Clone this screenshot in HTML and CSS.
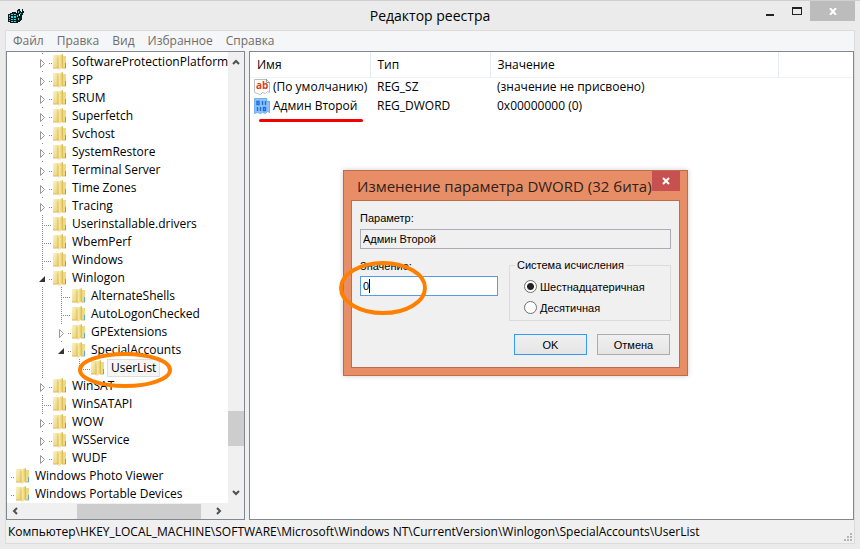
FILE: index.html
```
<!DOCTYPE html>
<html lang="ru">
<head>
<meta charset="utf-8">
<title>Редактор реестра</title>
<link rel="stylesheet" href="styles.css">
</head>
<body>
<svg class="defs" aria-hidden="true">
  <defs>
    <linearGradient id="gold" x1="0" x2="1" y1="0" y2="1"><stop offset="0" stop-color="#fbf3c4"/><stop offset="1" stop-color="#e8cd6c"/></linearGradient>
    <linearGradient id="fold" x1="0" x2="1"><stop offset="0" stop-color="#fbf1b8"/><stop offset=".6" stop-color="#efd981"/><stop offset="1" stop-color="#d6b650"/></linearGradient>
    <symbol id="folder" viewBox="0 0 14 16">
      <path d="M0 1h6v13H0z" fill="url(#gold)"/>
      <path d="M9 2h4v12H8z" fill="#efd981"/>
      <path d="M5 2l5-2v13l-4 3z" fill="url(#fold)"/>
      <path d="M4.500 2v12l1 2V3z" fill="#dcc062"/>
      <path d="M0 14h5M9 14h4" stroke="#d8bb5c"/>
      <path d="M12 9h1v5h-1z" fill="#55aede"/>
    </symbol>
    <symbol id="g-line" viewBox="0 0 19 18"><path d="M9.500 0v18" class="dots"/></symbol>
    <symbol id="g-tee" viewBox="0 0 19 18"><path d="M9.500 0v18M11 10.500h8" class="dots"/></symbol>
    <symbol id="g-end" viewBox="0 0 19 18"><path d="M8.500 0v10M10 10.500h9" class="dots"/></symbol>
    <symbol id="g-stub" viewBox="0 0 5 18"><path d="M1 10.500h3" class="dots"/></symbol>
    <symbol id="g-closed" viewBox="0 0 19 18"><path d="M9.500 0v2M16 10.500h3" class="dots"/><path d="M7.500 6.500v8l4-4z" fill="#fff" stroke="#999"/></symbol>
    <symbol id="g-open" viewBox="0 0 19 18"><path d="M9.500 0v2M16 10.500h3" class="dots"/><path d="M12 7v6H6z" fill="#333"/></symbol>
  </defs>
</svg>
<div class="window">
  <header class="titlebar">
    <svg class="app-icon" viewBox="0 0 16 16" aria-hidden="true">
      <path d="M0 6h2V5h2V4h4v1h1V2h1V1h2v2h2V1h1v2h1v2h-1v2h-1v5h-1v1h-1v1h-2v1H2v-1H0z" fill="#0b1a1c"/>
      <path d="M1 7h1v2H1zM3 6h2v1H3zM6 6h2v1H6zM3 8h2v2H3zM6 8h2v2H6zM1 10h1v1H1zM3 11h2v1H3zM6 11h2v1H6zM1 12h1v1H1zM3 13h2v1H3zM6 13h2v1H6zM10 3h1v2h-1zM12 5h1v1h-1zM9 7h1v2H9zM10 10h1v2h-1z" fill="#35d3d6"/>
      <path d="M11 6h1v2h-1zM13 3h1v1h-1z" fill="#d9f5f5"/>
    </svg>
    <h1>Редактор реестра</h1>
    <div class="caption-buttons">
      <button type="button" aria-label="Свернуть"><svg width="8" height="10"><path d="M0 8h8v2H0z" fill="#222"/></svg></button>
      <button type="button" aria-label="Развернуть"><svg width="10" height="8"><path d="M0 0h10v8H0zM1 2v5h8V2z" fill="#222" fill-rule="evenodd"/></svg></button>
      <button type="button" class="close" aria-label="Закрыть"><svg width="8" height="7"><path d="M1 0l6 7M7 0L1 7" stroke="#fff" stroke-width="2"/></svg></button>
    </div>
  </header>
  <div class="frame">
    <nav class="menu"><a href="#">Файл</a><a href="#">Правка</a><a href="#">Вид</a><a href="#">Избранное</a><a href="#">Справка</a></nav>
    <main class="panes">
      <section class="pane tree-pane" aria-label="Разделы">
        <ul class="tree">
          <li><svg class="g"><use href="#g-closed"/></svg><svg class="f"><use href="#folder"/></svg><span>SoftwareProtectionPlatform</span></li>
          <li><svg class="g"><use href="#g-closed"/></svg><svg class="f"><use href="#folder"/></svg><span>SPP</span></li>
          <li><svg class="g"><use href="#g-closed"/></svg><svg class="f"><use href="#folder"/></svg><span>SRUM</span></li>
          <li><svg class="g"><use href="#g-closed"/></svg><svg class="f"><use href="#folder"/></svg><span>Superfetch</span></li>
          <li><svg class="g"><use href="#g-closed"/></svg><svg class="f"><use href="#folder"/></svg><span>Svchost</span></li>
          <li><svg class="g"><use href="#g-closed"/></svg><svg class="f"><use href="#folder"/></svg><span>SystemRestore</span></li>
          <li><svg class="g"><use href="#g-closed"/></svg><svg class="f"><use href="#folder"/></svg><span>Terminal Server</span></li>
          <li><svg class="g"><use href="#g-closed"/></svg><svg class="f"><use href="#folder"/></svg><span>Time Zones</span></li>
          <li><svg class="g"><use href="#g-closed"/></svg><svg class="f"><use href="#folder"/></svg><span>Tracing</span></li>
          <li><svg class="g"><use href="#g-tee"/></svg><svg class="f"><use href="#folder"/></svg><span>Userinstallable.drivers</span></li>
          <li><svg class="g"><use href="#g-tee"/></svg><svg class="f"><use href="#folder"/></svg><span>WbemPerf</span></li>
          <li><svg class="g"><use href="#g-tee"/></svg><svg class="f"><use href="#folder"/></svg><span>Windows</span></li>
          <li><svg class="g"><use href="#g-open"/></svg><svg class="f"><use href="#folder"/></svg><span>Winlogon</span></li>
          <li><svg class="g"><use href="#g-line"/></svg><svg class="g"><use href="#g-tee"/></svg><svg class="f"><use href="#folder"/></svg><span>AlternateShells</span></li>
          <li><svg class="g"><use href="#g-line"/></svg><svg class="g"><use href="#g-tee"/></svg><svg class="f"><use href="#folder"/></svg><span>AutoLogonChecked</span></li>
          <li><svg class="g"><use href="#g-line"/></svg><svg class="g"><use href="#g-closed"/></svg><svg class="f"><use href="#folder"/></svg><span>GPExtensions</span></li>
          <li><svg class="g"><use href="#g-line"/></svg><svg class="g"><use href="#g-open"/></svg><svg class="f"><use href="#folder"/></svg><span>SpecialAccounts</span></li>
          <li class="current"><svg class="g"><use href="#g-line"/></svg><svg class="g"></svg><svg class="g"><use href="#g-end"/></svg><svg class="f"><use href="#folder"/></svg><span>UserList</span>
            <svg class="mark mark-tree" viewBox="0 0 96 38" aria-hidden="true"><ellipse cx="48" cy="19" rx="45" ry="16"/></svg></li>
          <li><svg class="g"><use href="#g-closed"/></svg><svg class="f"><use href="#folder"/></svg><span>WinSAT</span></li>
          <li><svg class="g"><use href="#g-tee"/></svg><svg class="f"><use href="#folder"/></svg><span>WinSATAPI</span></li>
          <li><svg class="g"><use href="#g-closed"/></svg><svg class="f"><use href="#folder"/></svg><span>WOW</span></li>
          <li><svg class="g"><use href="#g-closed"/></svg><svg class="f"><use href="#folder"/></svg><span>WSService</span></li>
          <li><svg class="g"><use href="#g-closed"/></svg><svg class="f"><use href="#folder"/></svg><span>WUDF</span></li>
          <li class="outer"><svg class="stub"><use href="#g-stub"/></svg><svg class="f"><use href="#folder"/></svg><span>Windows Photo Viewer</span></li>
          <li class="outer"><svg class="stub"><use href="#g-stub"/></svg><svg class="f"><use href="#folder"/></svg><span>Windows Portable Devices</span></li>
        </ul>
        <div class="vscroll">
          <svg width="8" height="7"><path d="M1 5l3-3 3 3" class="chev"/></svg>
          <div class="vthumb"></div>
          <svg width="8" height="7"><path d="M1 2l3 3 3-3" class="chev"/></svg>
        </div>
        <div class="hscroll">
          <svg width="7" height="8"><path d="M5 1L2 4l3 3" class="chev"/></svg>
          <div class="hthumb"></div>
          <svg width="7" height="8"><path d="M2 1l3 3-3 3" class="chev"/></svg>
        </div>
      </section>
      <section class="pane values" aria-label="Параметры">
        <table>
          <colgroup><col class="c-name"><col class="c-type"><col class="c-value"><col></colgroup>
          <thead><tr><th>Имя</th><th>Тип</th><th>Значение</th><th></th></tr></thead>
          <tbody>
            <tr><td><div class="name"><svg width="17" height="16" viewBox="0 0 17 16" aria-hidden="true"><path d="M.5.500h12l3 3v10l-2-1-2 2-3-1-2 2-3-1-3-1z" fill="#fff" stroke="#b9bcc2"/><path d="M12.500 0v3.500h3.500" fill="none" stroke="#999"/><text x="2" y="10" class="glyph-ab">ab</text></svg>(По умолчанию)</div></td><td>REG_SZ</td><td>(значение не присвоено)</td><td></td></tr>
            <tr><td><div class="name marked"><svg width="17" height="16" viewBox="0 0 17 16" aria-hidden="true"><path d="M.5.500h12l3 3v11l-2-1-2 2-3-1-2 1-3-1-3 1z" fill="#8cc3f9" stroke="#74b0ee"/><path d="M12.500 0v3.500h3.500" fill="#d5e9fc" stroke="#74b0ee"/><path d="M3 3.500h2v3H3zM8.500 3v4M11.500 3v4M3.500 9v4M6.500 9v4M9.500 9.500h2v3h-2z" fill="none" stroke="#1f6be0" stroke-width="1.400"/></svg>Админ Второй</div></td><td>REG_DWORD</td><td>0x00000000 (0)</td><td></td></tr>
          </tbody>
        </table>
      </section>
    </main>
    <footer class="status"><span>Компьютер\HKEY_LOCAL_MACHINE\SOFTWARE\Microsoft\Windows NT\CurrentVersion\Winlogon\SpecialAccounts\UserList</span>
      <svg width="8" height="8" aria-hidden="true"><path d="M6 0h2v2H6zM3 3h2v2H3zM6 3h2v2H6zM0 6h2v2H0zM3 6h2v2H3zM6 6h2v2H6z" fill="#b5b5b5"/></svg></footer>
  </div>

  <form class="dialog" role="dialog" aria-labelledby="dlg-title">
    <div class="dialog-title"><h2 id="dlg-title">Изменение параметра DWORD (32 бита)</h2>
      <button type="button" aria-label="Закрыть"><svg width="8" height="8"><path d="M1 1l6 6M7 1L1 7" stroke="#fff" stroke-width="2"/></svg></button></div>
    <div class="dialog-body">
      <label for="param">Параметр:</label>
      <input id="param" class="readonly" type="text" value="Админ Второй" readonly>
      <div class="columns">
        <div class="value">
          <label for="val">Значение:</label>
          <div class="field"><input id="val" type="text" value="0"><i class="caret"></i></div>
          <svg class="mark mark-value" viewBox="0 0 90 54" aria-hidden="true"><ellipse cx="45" cy="27" rx="42" ry="25"/></svg>
        </div>
        <fieldset>
          <legend>Система исчисления</legend>
          <label><input type="radio" name="base" checked>Шестнадцатеричная</label>
          <label><input type="radio" name="base">Десятичная</label>
        </fieldset>
      </div>
      <div class="actions"><button type="button" class="default">OK</button><button type="button">Отмена</button></div>
    </div>
  </form>
</div>
</body>
</html>
```
FILE: styles.css
```
* { box-sizing: border-box; }
body { margin: 0; font: 12px/18px "Open Sans", "Noto Sans", sans-serif; color: #000; }
h1, h2, ul { margin: 0; padding: 0; font-weight: 400; }
button { font: inherit; padding: 0; border: 0; background: none; }
svg { display: block; flex: none; }
.defs { position: absolute; width: 0; height: 0; }
.dots { stroke: #888; fill: none; stroke-dasharray: 1 1; }
.chev { stroke: #505050; stroke-width: 2; fill: none; }

.window { position: relative; min-height: 100vh; display: flex; flex-direction: column; background: #ebebeb; border-top: 1px solid #cfcfcf; padding: 0 5px 5px; }
.titlebar { display: grid; grid-template-columns: 1fr auto 1fr; height: 29px; }
.app-icon { width: 16px; height: 16px; margin: 7px 3px; }
h1 { font-size: 14px; line-height: 29px; }
.caption-buttons { display: flex; justify-content: flex-end; align-items: flex-start; }
.caption-buttons button { width: 27px; height: 20px; display: grid; place-items: center; }
.caption-buttons .close { width: 45px; background: #bcbcbc; }

.frame { flex: 1; display: flex; flex-direction: column; border: 1px solid #dcdcdc; }
.menu { display: flex; gap: 13px; height: 20px; padding: 0 7px; background: #f5f6f7; line-height: 20px; }
.menu a { color: #6d6d6d; text-decoration: none; }
.panes { flex: 1; display: grid; grid-template-columns: 239px minmax(0, 1fr); gap: 4px; background: #f0f0f0; }
.pane { border: 1px solid #828790; background: #fff; }

.tree-pane { display: grid; grid-template-columns: minmax(0, 1fr) 16px; grid-template-rows: 1fr 16px; }
.tree { list-style: none; padding-top: 1px; }
.tree li { position: relative; display: flex; align-items: center; height: 18px; padding-left: 26px; white-space: nowrap; }
.tree .outer { padding-left: 3px; }
.g { width: 19px; height: 18px; }
.stub { width: 5px; height: 18px; }
.f { width: 14px; height: 16px; margin: 0 3px 0 1px; }
.tree span { padding: 0 2px; line-height: 16px; }
.current .f { margin-right: 2px; }
.current span { padding: 0 3px; border: 1px solid #dedede; background: #f5f5f5; }
.vscroll { background: #f0f0f0; display: flex; flex-direction: column; align-items: center; padding: 7px 0; }
.vthumb { width: 16px; height: 35px; margin: auto 0 43px; background: #cdcdcd; }
.hscroll { grid-column: 1 / -1; background: #f0f0f0; display: flex; align-items: center; padding: 0 22px 0 5px; }
.hthumb { width: 124px; height: 15px; margin: 0 auto 0 58px; background: #cdcdcd; }

.mark { position: absolute; fill: none; stroke: #ff8000; stroke-width: 4; }
.mark-tree { left: 70px; top: -8px; width: 96px; height: 38px; z-index: 1; }

.values table { width: 100%; border-collapse: collapse; table-layout: fixed; }
.c-name { width: 120px; }
.c-type { width: 120px; }
.c-value { width: 288px; }
th { height: 25px; padding: 2px 7px 0; text-align: left; font-weight: 400; border-right: 1px solid #e3ebf3; border-bottom: 1px solid #eef2f6; }
th:last-child { border-right: 0; }
td { height: 19px; padding: 0 7px; white-space: nowrap; }
td:first-child { padding: 0 0 0 4px; }
.name { position: relative; display: flex; align-items: center; gap: 2px; }
.marked::after { content: ""; position: absolute; left: 5px; top: 22px; width: 104px; height: 3px; border-radius: 2px; background: #f50000; }
.glyph-ab { font: bold 10px "Open Sans", sans-serif; fill: #d8431f; }

.status { display: flex; justify-content: space-between; height: 23px; padding: 3px 2px 2px; background: #f0f0f0; }
.status svg { align-self: flex-end; }

.dialog { position: absolute; left: 343px; top: 169px; width: 345px; padding: 0 7px 7px; background: #e88e67; border: 1px solid #bd6d4e; box-shadow: 0 0 5px #0003; font: 11px/14px "Liberation Sans", Arial, sans-serif; }
.dialog-title { display: flex; justify-content: space-between; height: 29px; padding-left: 6px; }
h2 { font: 15px/30px "Open Sans", sans-serif; color: #30211b; white-space: nowrap; }
.dialog-title button { width: 28px; height: 20px; display: grid; place-items: center; background: #c75050; }
.dialog-body { border: 1px solid #bd6d4e; background: #f0f0f0; padding: 10px 8px 12px; }
.dialog-body > label, .value > label { display: block; }
input[type=text] { display: block; width: 100%; height: 20px; padding: 0 2px; border: 1px solid #abadb3; font: inherit; outline: 0; }
.readonly { margin-top: 4px; background: #f0f0f0; }
.columns { display: grid; grid-template-columns: 138px 162px; justify-content: space-between; margin-top: 9px; }
.value { position: relative; padding-top: 1px; }
.field { position: relative; margin-top: 3px; }
.field input { border-color: #569de5; }
.caret { position: absolute; left: 9px; top: 3px; width: 1px; height: 14px; background: #000; }
.mark-value { left: -22px; top: 3px; width: 90px; height: 54px; }
fieldset { margin: 0; padding: 4px 14px 7px; border: 1px solid #dcdcdc; height: 63px; }
legend { padding: 0 2px; margin-left: -9px; }
fieldset label { display: flex; align-items: center; gap: 3px; height: 21px; }
input[type=radio] { appearance: none; width: 13px; height: 13px; margin: 0; border: 1px solid #707070; border-radius: 50%; background: #fff; }
input[type=radio]:checked { background: radial-gradient(circle, #222 3px, #fff 4px); }
.actions { display: flex; justify-content: flex-end; gap: 10px; margin: 13px 1px 0 0; }
.actions button { width: 73px; height: 21px; border: 1px solid #acacac; background: linear-gradient(#f0f0f0, #e5e5e5); }
.actions .default { border-color: #3399ff; }
```
